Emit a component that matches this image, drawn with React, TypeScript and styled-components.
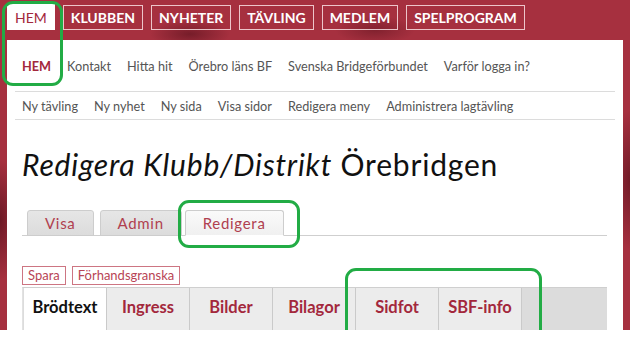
import React from "react";
import styled, { createGlobalStyle, css } from "styled-components";

const crimson = "#a6303f";
const linkRed = "#a3283c";

const GlobalStyle = createGlobalStyle`
  html, body { margin: 0; padding: 0; background: #fff; }
  body { font-family: Lato, "Open Sans", sans-serif; }
  * { box-sizing: border-box; }
`;

const Page = styled.div`
  position: relative;
  width: 630px;
  height: 330px;
  overflow: hidden;
  display: flex;
  flex-direction: column;
  background:
    radial-gradient(ellipse 40px 14px at 190px 34px, rgba(60, 5, 15, 0.45), transparent),
    radial-gradient(ellipse 40px 14px at 375px 30px, rgba(60, 5, 15, 0.35), transparent),
    radial-gradient(ellipse 20px 60px at 0px 220px, rgba(60, 5, 15, 0.55), transparent),
    radial-gradient(ellipse 20px 70px at 630px 180px, rgba(60, 5, 15, 0.5), transparent),
    ${crimson};
`;

const TopNav = styled.nav`
  display: flex;
  align-items: flex-start;
  gap: 8px;
  height: 40px;
  padding: 3px 0 0 7px;
`;

const TopItem = styled.a<{ $active?: boolean }>`
  display: block;
  height: 25px;
  margin-top: 2px;
  padding: 0 7px;
  border: 1px solid rgba(255, 235, 238, 0.8);
  color: #fff;
  font-size: 14px;
  font-weight: 700;
  line-height: 23px;
  text-decoration: none;
  ${(p) =>
    p.$active &&
    css`
      height: 27px;
      margin-top: 0;
      border-color: #fff;
      background: #fff;
      color: ${linkRed};
      font-weight: 400;
      line-height: 27px;
      padding: 0 7px;
    `}
`;

const Panel = styled.main`
  flex: 1;
  margin: 0 7px;
  padding: 0 8px;
  background: #fff;
  display: flex;
  flex-direction: column;
`;

const MenuRow = styled.div<{ $h: number }>`
  display: flex;
  align-items: center;
  height: ${(p) => p.$h}px;
  border-bottom: 1px solid #dcdcdc;
`;

const MenuLink = styled.a<{ $active?: boolean }>`
  padding: 0 8px 0 7px;
  margin-right: 1px;
  font-size: 12.7px;
  color: #555;
  text-decoration: none;
  white-space: nowrap;
  ${(p) =>
    p.$active &&
    css`
      color: ${linkRed};
      font-weight: 700;
    `}
`;

const Title = styled.h1`
  margin: 26px 0 0 7px;
  font-size: 30px;
  line-height: 36px;
  letter-spacing: 0.8px;
  font-weight: 400;
  color: #111;
  em { font-style: italic; }
`;

const ViewTabs = styled.div`
  display: flex;
  align-items: flex-end;
  gap: 6px;
  margin: 28px 8px 0 7px;
  padding-left: 5px;
  border-bottom: 1px solid #cfcfcf;
`;

const ViewTab = styled.a<{ $active?: boolean }>`
  height: 26px;
  padding: 0 17px;
  margin-bottom: -1px;
  border: 1px solid #cdcdcd;
  border-radius: 3px 3px 0 0;
  background: linear-gradient(#e6e6e6, #dcdcdc);
  color: #b0404f;
  font-size: 15px;
  letter-spacing: 0.7px;
  line-height: 25px;
  text-decoration: none;
  ${(p) =>
    p.$active &&
    css`
      margin-left: -3px;
      border-bottom-color: #fff;
      background: linear-gradient(#fafafa, #f0f0f0);
    `}
`;

const Actions = styled.div`
  display: flex;
  gap: 6px;
  margin: 30px 0 0 7px;
`;

const ActionButton = styled.button`
  height: 19px;
  padding: 0 5px;
  border: 1px solid #cd7582;
  background: #fff;
  color: #b84455;
  font-family: Lato, sans-serif;
  font-size: 13px;
  line-height: 17px;
  cursor: pointer;
`;

const EditorTabs = styled.div`
  display: flex;
  flex: 1;
  margin: 2px 8px 0 7px;
  padding-left: 1px;
  border-top: 1px solid #cfcfcf;
  border-left: 1px solid #e2e2e2;
  background: #dcdcdc;
`;

const EditorTab = styled.a<{ $active?: boolean }>`
  width: 83px;
  display: flex;
  justify-content: center;
  padding-top: 9px;
  border-right: 1px solid #cacaca;
  background: ${(p) => (p.$active ? "#fff" : "#ececec")};
  color: ${(p) => (p.$active ? "#111" : linkRed)};
  font-size: 16.5px;
  font-weight: 700;
  text-decoration: none;
`;

const Highlight = styled.div<{ $x: number; $y: number; $w: number; $h: number }>`
  position: absolute;
  left: ${(p) => p.$x}px;
  top: ${(p) => p.$y}px;
  width: ${(p) => p.$w}px;
  height: ${(p) => p.$h}px;
  border: 3px solid #22ac45;
  border-radius: 11px;
  pointer-events: none;
`;

const topItems = ["HEM", "KLUBBEN", "NYHETER", "TÄVLING", "MEDLEM", "SPELPROGRAM"];
const mainLinks = ["HEM", "Kontakt", "Hitta hit", "Örebro läns BF", "Svenska Bridgeförbundet", "Varför logga in?"];
const adminLinks = ["Ny tävling", "Ny nyhet", "Ny sida", "Visa sidor", "Redigera meny", "Administrera lagtävling"];
const viewTabs = ["Visa", "Admin", "Redigera"];
const editorTabs = ["Brödtext", "Ingress", "Bilder", "Bilagor", "Sidfot", "SBF-info"];

export default function App() {
  return (
    <>
      <GlobalStyle />
      <Page>
        <TopNav>
          {topItems.map((t, i) => (
            <TopItem key={t} $active={i === 0}>
              {t}
            </TopItem>
          ))}
        </TopNav>
        <Panel>
          <MenuRow $h={52}>
            {mainLinks.map((t, i) => (
              <MenuLink key={t} $active={i === 0}>
                {t}
              </MenuLink>
            ))}
          </MenuRow>
          <MenuRow $h={28}>
            {adminLinks.map((t) => (
              <MenuLink key={t}>{t}</MenuLink>
            ))}
          </MenuRow>
          <Title>
            <em>Redigera Klubb/Distrikt</em> Örebridgen
          </Title>
          <ViewTabs>
            {viewTabs.map((t, i) => (
              <ViewTab key={t} $active={i === 2}>
                {t}
              </ViewTab>
            ))}
          </ViewTabs>
          <Actions>
            <ActionButton>Spara</ActionButton>
            <ActionButton>Förhandsgranska</ActionButton>
          </Actions>
          <EditorTabs>
            {editorTabs.map((t, i) => (
              <EditorTab key={t} $active={i === 0}>
                {t}
              </EditorTab>
            ))}
          </EditorTabs>
        </Panel>
        <Highlight $x={2} $y={1} $w={61} $h={85} />
        <Highlight $x={178} $y={200} $w={122} $h={48} />
        <Highlight $x={345} $y={268} $w={197} $h={72} />
      </Page>
    </>
  );
}
